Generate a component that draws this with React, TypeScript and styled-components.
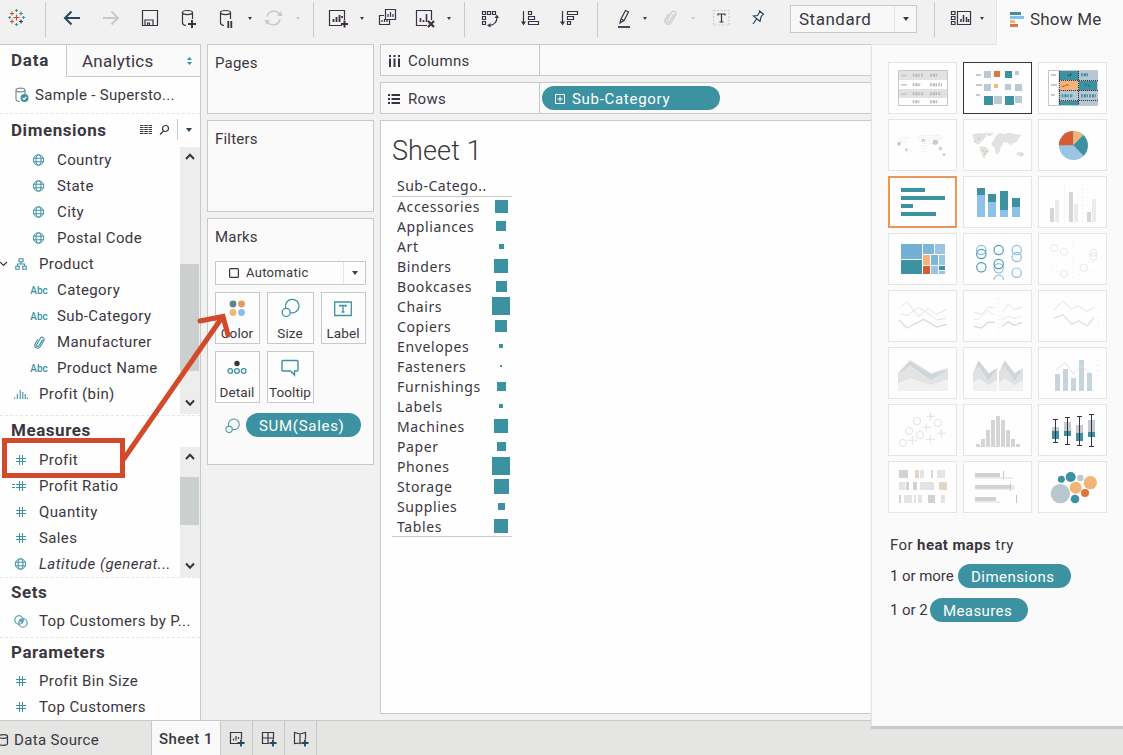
import React from "react";
import styled, { createGlobalStyle, css } from "styled-components";

const c = {
  teal: "#3d92a2", ink: "#3c3142", text: "#3b3741", line: "#c6cbc9", soft: "#e5e5e3",
  chrome: "#f1f1f1", card: "#fafafa", blue: "#85c0ea", lblue: "#9ac4e2", orange: "#f0b577", red: "#d24a2b",
  grey: "#c6cbc9",
};

const Global = createGlobalStyle`
  * { box-sizing: border-box; }
  body { margin: 0; background: ${c.chrome}; overflow: hidden; }
  body, button { font-family: Roboto, "Liberation Sans", sans-serif; font-size: 15px; color: ${c.text}; }
  svg { display: block; flex: none; overflow: visible; }
`;

const Window = styled.div`
  position: relative; width: 1123px; height: 755px; display: flex; flex-direction: column; overflow: hidden; background: ${c.chrome};
`;

/* ---------- toolbar ---------- */
const Toolbar = styled.header`display: flex; height: 44px; flex: none;`;
const Tools = styled.div`display: flex; width: 996px; height: 44px; align-items: flex-start;`;
const ToolSvg = styled.svg<{ $gap: number }>`margin-left: ${(p) => p.$gap}px;`;
const Sep = styled.i<{ $gap: number }>`width: 1px; height: 35px; margin: 2px 0 0 ${(p) => p.$gap}px; background: ${c.line}; flex: none;`;
const Fit = styled.div`
  display: flex; align-items: center; margin: 5px 0 0 25px; width: 127px; height: 28px; border: 1px solid ${c.line}; background: #f8f8f8;
  font-size: 17px; letter-spacing: 0.5px; padding-left: 8px;
`;
const FitArrow = styled.span`margin-left: auto; width: 22px; height: 26px; border-left: 1px solid ${c.soft}; display: flex; align-items: center; justify-content: center;`;
const ShowMeTab = styled.div`
  flex: 1; display: flex; align-items: center; gap: 6px; padding: 0 0 7px 13px; height: 45px; background: ${c.card}; border-left: 1px solid ${c.soft};
  font-size: 17px; letter-spacing: 0.2px; position: relative; z-index: 3;
`;
const Caret = styled.i<{ $gap?: number; $off?: boolean; $size?: number }>`
  width: 0; height: 0; flex: none; margin: ${(p) => (p.$gap !== undefined ? `17px 1px 0 ${p.$gap}px` : "0")};
  border: ${(p) => p.$size ?? 2}px solid transparent; border-top: ${(p) => (p.$size ?? 2) + 1}px solid ${(p) => (p.$off ? c.grey : "#2b4456")}; border-bottom: 0;
`;

const Tool = ({ x, w, gap, off, children }: { x: number; w: number; gap: number; off?: boolean; children: React.ReactNode }) => (
  <ToolSvg $gap={gap} width={w} height={36} viewBox={`${x} 0 ${w} 36`} fill="none" stroke={off ? c.grey : c.ink} strokeWidth={1.2}>
    {children}
  </ToolSvg>
);

const plus = (x: number, y: number, s: number, col: string) => (
  <path key={`${x}-${y}`} d={`M${x - s} ${y}h${2 * s}M${x} ${y - s}v${2 * s}`} stroke={col} strokeWidth={1.1} />
);

/* ---------- body ---------- */
const Body = styled.div`display: flex; height: 676px; flex: none; position: relative; z-index: 2;`;
const Side = styled.aside`width: 201px; border-top: 1px solid ${c.line}; border-right: 1px solid ${c.line}; background: #fefefe; display: flex; flex-direction: column; overflow: hidden;`;
const Tabs = styled.div`display: flex; height: 32px; flex: none; font-size: 17px;`;
const ActiveTab = styled.div`width: 66px; padding-left: 11px; line-height: 31px; font-weight: 700; letter-spacing: 0.8px;`;
const Tab = styled.div`
  flex: 1; display: flex; align-items: center; justify-content: space-between; padding: 1px 8px 0 15px; background: ${c.card};
  border-left: 1px solid ${c.line}; border-bottom: 1px solid ${c.line}; letter-spacing: 0.25px;
`;
const Source = styled.div`
  display: flex; align-items: center; height: 37px; padding: 0 0 1px 15px; gap: 6px; border-bottom: 1px dashed ${c.soft}; letter-spacing: 0.32px; white-space: nowrap;
`;
const Section = styled.section<{ $h: number }>`height: ${(p) => p.$h}px; flex: none; border-bottom: 1px dashed ${c.soft};`;
const Heading = styled.h2<{ $h: number; $drop?: number }>`
  margin: 0; padding: 0 0 ${(p) => p.$drop ?? 2}px 11px; height: ${(p) => p.$h}px; display: flex; align-items: center; font-size: 17px; font-weight: 700; letter-spacing: 0.55px;
`;
const HeadTools = styled.span`margin-left: auto; display: flex; align-items: center; height: 22px; gap: 8px;`;
const HeadCaret = styled.span`width: 23px; height: 21px; border-left: 1px solid ${c.line}; display: flex; align-items: center; justify-content: center;`;
const Scroll = styled.div`display: flex; justify-content: space-between;`;
const List = styled.div`flex: 1; min-width: 0;`;
const Row = styled.div<{ $indent?: boolean; $italic?: boolean }>`
  display: grid; grid-template-columns: ${(p) => (p.$indent ? "57px" : "39px")} auto; justify-content: start; align-items: center; height: 26px; white-space: nowrap; letter-spacing: 0.38px;
  ${(p) => p.$italic && css`font-style: italic; letter-spacing: 0.5px;`}
`;
const Slot = styled.span<{ $indent?: boolean }>`
  display: flex; align-items: center; justify-content: center; width: 20px; margin-left: ${(p) => (p.$indent ? 29 : 11)}px;
`;
const ParentSlot = styled.span`display: flex; align-items: center; gap: 7px; margin-left: -1px;`;
const Abc = styled.b`font-size: 10px; letter-spacing: 0; color: ${c.teal}; font-weight: 500;`;
const Bar = styled.div<{ $h: number }>`width: 20px; height: ${(p) => p.$h}px; background: #ededec; display: flex; flex-direction: column; align-items: center; justify-content: space-between; padding: 6px 0 7px;`;
const Track = styled.div<{ $top: number }>`flex: 1; width: 20px; padding-top: ${(p) => p.$top}px;`;
const Grip = styled.div<{ $h: number }>`height: ${(p) => p.$h}px; background: #cbd0ce; width: 19px;`;

const Cards = styled.div`width: 167px; margin-left: 6px; display: flex; flex-direction: column; gap: 6px;`;
const Card = styled.div<{ $h: number }>`
  height: ${(p) => p.$h}px; border: 1px solid ${c.line}; background: ${c.card}; padding: 9px 7px; line-height: 18px; letter-spacing: 0.2px;
`;
const MarkType = styled.div`display: flex; align-items: center; margin-top: 15px; height: 24px; border: 1px solid ${c.line}; background: #fdfdfd; padding-left: 13px; gap: 7px; font-size: 13px; letter-spacing: 0.3px;`;
const MarkArrow = styled.span`margin-left: auto; width: 22px; height: 22px; border-left: 1px solid ${c.soft}; display: flex; align-items: center; justify-content: center;`;
const MarkGrid = styled.div`display: grid; grid-template-columns: 45px 47px 45px; gap: 7px; margin-top: 7px;`;
const MarkButton = styled.div`
  height: 52px; border: 1px solid ${c.line}; background: #fdfdfd; display: flex; flex-direction: column; align-items: center; justify-content: space-between; padding: 5px 1px 1px 0;
  font-size: 13.5px; letter-spacing: 0.1px; white-space: nowrap;
`;
const Encoding = styled.div`display: flex; align-items: center; margin: 10px 0 0 10px; gap: 6px;`;
const Pill = styled.span<{ $w: number; $ls?: number }>`
  display: inline-flex; align-items: center; gap: 7px; width: ${(p) => p.$w}px; height: 24px; border-radius: 12px; padding: 1px 0 0 13px; background: ${c.teal}; color: #fff; letter-spacing: ${(p) => p.$ls ?? 0.45}px; white-space: nowrap;
`;

const Main = styled.main`width: 491px; margin-left: 6px; display: flex; flex-direction: column;`;
const Shelf = styled.div`display: flex; height: 32px; margin-bottom: 6px; border: 1px solid ${c.line}; border-right: 0; background: ${c.card};`;
const ShelfName = styled.div`width: 159px; border-right: 1px solid ${c.line}; display: flex; align-items: center; gap: 8px; padding: 1px 0 0 7px; letter-spacing: 0.3px;`;
const ShelfDrop = styled.div`flex: 1; display: flex; align-items: center; padding-left: 2px;`;
const Sheet = styled.div`height: 594px; border: 1px solid ${c.line}; border-right: 0; background: #fefefe; padding: 13px 0 0 11px;`;
const Title = styled.h1`margin: 0; font: 300 27px/34px Roboto, sans-serif; letter-spacing: 0.1px;`;
const Table = styled.div`width: 120px; height: 361px; margin-top: 8px; border-bottom: 1px solid ${c.line}; font-family: "Noto Sans", sans-serif; font-size: 14px; letter-spacing: 0.62px;`;
const TableHead = styled.div`height: 21px; line-height: 20px; border-bottom: 1px solid ${c.line}; padding-left: 5px; letter-spacing: 0.5px;`;
const Line = styled.div`display: grid; grid-template-columns: 98px 22px; align-items: center; height: 20px; padding-left: 5px; line-height: 20px; width: 125px;`;
const MarkCell = styled.span`display: flex; justify-content: center; width: 22px;`;
const Mark = styled.i<{ $s: number }>`
  width: ${(p) => p.$s}px; height: ${(p) => p.$s}px; background: ${c.teal}; margin: ${(p) => (p.$s % 2 ? "-1px 0 0 -9px" : "-2px 0 0 -10px")};
`;

const ShowMe = styled.aside`
  flex: 1; height: 682px; border-left: 1px solid ${c.soft}; background: ${c.card}; padding: 18px 16px 0; box-shadow: 0 2px 0 ${c.grey}, 0 3px 1px ${c.grey}, inset 0 1px 0 ${c.soft};
`;
const Thumbs = styled.div`display: grid; grid-template-columns: repeat(3, 69px); gap: 5px 6px;`;
const Thumb = styled.div<{ $kind?: string }>`
  width: 69px; height: 52px; background: #fefefe;
  box-shadow: inset 0 0 0 ${(p) => (p.$kind === "best" ? `2px #e8965a` : p.$kind === "on" ? `1px ${c.ink}` : `1px ${c.soft}`)};
`;
const Hint = styled.p<{ $top: number }>`margin: ${(p) => p.$top}px 0 0 2px; height: 24px; display: flex; align-items: center; gap: 3px; white-space: pre; letter-spacing: 0.4px;`;
const Count = styled.span<{ $w: number }>`width: ${(p) => p.$w}px; letter-spacing: -0.05px;`;

/* ---------- bottom tabs ---------- */
const Bottom = styled.footer`display: flex; height: 35px; border-top: 1px solid ${c.line}; background: ${c.soft}; align-items: stretch;`;
const DataTab = styled.div`width: 152px; display: flex; align-items: center; gap: 5px; padding-top: 3px; border-right: 1px solid ${c.line}; letter-spacing: 0.35px;`;
const SheetTab = styled.div`width: 69px; padding-left: 7px; padding-top: 2px; display: flex; align-items: center; background: #f9f9f9; border-right: 1px solid ${c.line}; font-weight: 500; letter-spacing: 0.45px; white-space: nowrap;`;
const NewTab = styled.div`width: 32px; display: flex; align-items: center; justify-content: center; padding-top: 1px; border-right: 1px solid ${c.line};`;

const Annotation = styled.svg`position: absolute; left: 0; top: 0; z-index: 5; pointer-events: none;`;

/* ---------- small icons ---------- */
const Globe = () => (
  <svg width="12" height="12" viewBox="0 0 12 12" fill="none" stroke={c.teal} strokeWidth="1">
    <circle cx="5.500" cy="6" r="5.200" /><ellipse cx="5.500" cy="6" rx="2.500" ry="5.200" /><path d="M.7 4.200h9.600M.7 7.800h9.600" />
  </svg>
);
const Hash = () => (
  <svg width="12" height="12" viewBox="0 0 12 12" fill="none" stroke={c.teal} strokeWidth="1"><path d="M4.500 1v10M7.500 1v10M1 4.500h10M1 7.500h10" /></svg>
);
const CalcHash = () => (
  <svg width="20" height="12" viewBox="-4 0 20 12" fill="none" stroke={c.teal} strokeWidth="1"><path d="M4.500 1v10M7.500 1v10M1 4.500h10M1 7.500h10M-3 4.500h3M-3 7.500h3" /></svg>
);
const Clip = ({ col = c.teal }: { col?: string }) => (
  <svg width="11" height="13" viewBox="0 0 11 13" fill="none" stroke={col} strokeWidth="1.1"><path d="M8.6 3.6 5 9.8a1.3 1.3 0 0 1-2.3-1.3L6.2 2.4a2.1 2.1 0 0 1 3.7 2L6 11a2.9 2.9 0 0 1-5-2.8l2.8-4.9" /></svg>
);
const Tree = () => (
  <svg width="12" height="12" viewBox="0 0 12 12" fill="none" stroke={c.teal} strokeWidth="1.1"><path d="M4 .8h4v3H4zM.8 8.2h3.4v3H.8zM7.8 8.2h3.4v3H7.8zM6 3.8V6M2.5 8V6h7v2" /></svg>
);
const Bins = () => (
  <svg width="14" height="10" viewBox="0 0 14 10" stroke={c.teal} strokeWidth="1.1"><path d="M.7 8.500V10M3.300 5v5M6.200 1v9M8.800 3v7M11.200 5v5M13.400 8.500V10" /></svg>
);
const Rings = () => (
  <svg width="14" height="13" viewBox="0 0 14 13" fill="none" stroke={c.teal} strokeWidth="1.1"><circle cx="5" cy="5" r="4.200" /><circle cx="9" cy="8" r="4.200" /><path d="m5 5 4 3M6.5 4.2 9.3 6.4" /></svg>
);
const Chevron = ({ up }: { up?: boolean }) => (
  <svg width="10" height="8" viewBox="0 0 10 8" fill="none" stroke={c.ink} strokeWidth="2"><path d={up ? "M1 6 5 1.700 9 6" : "M1 1.5 5 5.8 9 1.5"} /></svg>
);
const SizeIcon = ({ s = 19 }: { s?: number }) => (
  <svg width={s} height={s} viewBox="0 0 19 19" fill="none" stroke={c.teal} strokeWidth="1.3"><path d="M4.800 10.300a6.800 6.800 0 1 1 4.800 4.400" /><circle cx="5.2" cy="14.400" r="4" /></svg>
);

const Field = ({ icon, name, indent, italic }: { icon: React.ReactNode; name: string; indent?: boolean; italic?: boolean }) => (
  <Row $indent={indent} $italic={italic}><Slot $indent={indent}>{icon}</Slot>{name}</Row>
);

/* ---------- Show Me drawings ---------- */
const R = ({ x, y, w, h, f }: { x: number; y: number; w: number; h: number; f: string }) => <rect x={x} y={y} width={w} height={h} fill={f} />;
const rects = (f: string, list: number[][]) => list.map(([x, y, w, h], i) => <R key={f + i} x={x} y={y} w={w} h={h} f={f} />);
const Trace = ({ d, f = "#e2e3e2", w = 3 }: { d: string; f?: string; w?: number }) => <path d={d} fill="none" stroke={f} strokeWidth={w} />;
const rings = (f: string, list: number[][], r = 14, w = 3.5) => list.map(([x, y], i) => <circle key={f + i} cx={x} cy={y} r={r} fill="none" stroke={f} strokeWidth={w} />);
const Scribble = ({ pts, f = "#b4bcba" }: { pts: number[][]; f?: string }) => (
  <>{pts.map(([x, y, w], i) => <path key={i} d={`M${x} ${y}h${w}`} stroke={f} strokeWidth="9" strokeDasharray="5 3 7 2 4 4" />)}</>
);

const drawings: React.ReactNode[] = [
  <>
    <rect x="85.500" y="61.500" width="147" height="105" fill="#fff" stroke={c.grey} strokeWidth="3" />
    {rects("#e2e3e1", [[87, 63, 144, 27], [87, 117, 144, 27]])}
    {rects(c.grey, [[93, 74, 18, 5], [93, 102, 18, 5], [93, 130, 18, 5]])}
    <Scribble pts={[[128, 76, 31], [180, 76, 26], [180, 104, 36], [128, 104, 26], [128, 131, 34], [180, 131, 34], [128, 155, 20], [180, 155, 26]]} />
  </>,
  <>
    {rects(c.grey, [[318, 72, 15, 6], [318, 102, 18, 6], [318, 132, 12, 6]])}
    {rects("#b8cad5", [[342, 63, 21, 21], [435, 63, 12, 12], [342, 102, 21, 21], [405, 102, 18, 18], [435, 102, 21, 21], [372, 138, 24, 24], [435, 138, 21, 21]])}
    {rects("#de7440", [[372, 63, 18, 18]])}{rects(c.orange, [[372, 102, 12, 12]])}
    {rects(c.teal, [[405, 63, 21, 21], [342, 138, 27, 27], [405, 138, 27, 27]])}
  </>,
  <>
    <rect x="535.500" y="61.500" width="147" height="105" fill="#fff" stroke={c.grey} strokeWidth="3" />
    {rects(c.grey, [[543, 72, 15, 6], [543, 102, 18, 6], [543, 132, 12, 6]])}
    {rects(c.teal, [[567, 63, 59, 27], [627, 93, 54, 28], [567, 153, 59, 12]])}
    {rects("#b4c7d2", [[627, 63, 57, 27], [567, 122, 59, 28], [627, 122, 57, 28], [627, 153, 57, 12]])}
    {rects(c.orange, [[569, 93, 55, 27]])}
    <path d="M567 91.500h117M567 121.500h117M567 151.500h117M625.500 63v102M568 63v102" stroke={c.ink} strokeWidth="3" strokeDasharray="4 2" />
    <Scribble f={c.teal} pts={[[575, 137, 34], [633, 137, 44], [633, 74, 24]]} /><path d="M593 76h5M602 70v8M646 104h3M655 107h3" stroke={c.ink} fill="none" strokeWidth="3" /><path d="M575 109h8l4-4h9" stroke={c.red} fill="none" strokeWidth="3" />
  </>,
  <>
    <g fill="none" stroke="#e2e3e2" strokeWidth="2.500" strokeDasharray="3 3">
      <path d="M84 270h20M87 264h32M90 276h24M104 258h12M106 296h18M110 304h16M113 312h8M144 256h12M142 262h76M146 268h70M150 274h62M156 280h40M152 288h20M154 296h18M160 304h10M164 312h5M150 256h60M206 290h12M208 298h8M218 314h12" />
    </g>
    <g fill="#c9cdcb"><circle cx="87" cy="281" r="6" /><circle cx="160" cy="271" r="5" /><circle cx="196" cy="277" r="8" /><circle cx="109" cy="299" r="4" /><circle cx="211" cy="296" r="5" /><circle cx="222" cy="314" r="4" /></g>
    <R x={197} y={274} w={4} h={4} f="#e3c095" />
  </>,
  <>
    <path fill="#e1e2e1" d="M306 253l18-3 10-1 14 4 2 7-7 4-3 6-7 5-4 6-7 3-6-7-5-10zM340 249l30-1-4 8-10 3-6-4zM330 290l12-1 13 8 2 7-9 10-4 11-5 0-4-16-6-9zM371 272l4-10 8-9 8-4 12 3 14-4 20 5 16 1-1 5-6 4-3 9-8 6-7 1-3 7-7-3-5-7-8 3-5-4-2 8 0 3-5 3-3 14-8 12-6-7-1-15-10-7 0-9 7-6zM437 313l8-7 14 0 3 9-8 5-8-3z" />
    {rects(c.orange, [[324, 264, 4, 4], [312, 273, 4, 4], [336, 300, 4, 4], [348, 303, 4, 4], [342, 309, 4, 4], [453, 312, 4, 4]])}
  </>,
  <>
    <circle cx="610.500" cy="286.500" r="43.500" fill={c.lblue} />
    <path d="M610 286V243a43.500 43.500 0 0 0-43.500 43z" fill="#d65a35" /><path d="M610 286V243a43 43 0 0 1 30 12z" fill={c.orange} /><path d="M610 286l30-31a43.500 43.500 0 0 1 1 62z" fill={c.teal} />
  </>,
  <>{rects(c.teal, [[93, 414, 72, 12], [93, 438, 132, 12], [93, 462, 36, 12], [93, 486, 105, 12]])}</>,
  <>
    {rects(c.teal, [[321, 414, 24, 21], [354, 432, 24, 24], [390, 423, 24, 57], [426, 444, 24, 27]])}
    {rects("#8cc2e7", [[321, 435, 24, 66], [354, 456, 24, 45], [390, 480, 24, 21], [426, 471, 24, 30]])}
  </>,
  <>
    {rects("#d3d6d4", [[540, 474, 12, 42], [597, 426, 12, 90], [651, 486, 12, 30]])}{rects("#ebecea", [[555, 450, 12, 66], [612, 462, 12, 54], [666, 447, 12, 69]])}
    <path d="M583.500 405v112M637.500 402v115" stroke="#e2e3e2" strokeWidth="2.500" strokeDasharray="3 9" />
  </>,
  <>
    {rects("#72afd2", [[93, 582, 63, 45]])}{rects("#7cb6da", [[159, 582, 33, 30], [183, 615, 21, 30]])}{rects(c.lblue, [[195, 582, 30, 30], [207, 615, 18, 30], [183, 648, 21, 24], [207, 663, 18, 9]])}
    {rects(c.teal, [[93, 630, 63, 42], [207, 648, 18, 12]])}{rects(c.orange, [[159, 615, 21, 30]])}{rects("#d65a35", [[159, 648, 21, 24]])}
  </>,
  <>
    {rings("#8abfe0", [[334, 600], [386, 655], [440, 600], [440, 621], [440, 668]])}
    {rings("#4c9cad", [[334, 612], [334, 652], [386, 600], [386, 642]])}
    <path d="M372 690a14 14 0 0 1 29 0" fill="none" stroke={c.lblue} strokeWidth="3.500" />
  </>,
  <>
    {rings("#e2e3e2", [[553, 594], [582, 605], [670, 608], [670, 620], [582, 671], [641, 653]], 11, 2.5)}
    <path d="M543 648h18M544 664h20M594 590h12M632 585v12M654 636h28M610 575v120M660 664h16M548 678h14M628 672h20" stroke="#e4e5e4" strokeWidth="2.500" strokeDasharray="3 12" />
  </>,
  <><Trace d="M93 66 111 50 146 94 176 70 197 89 231 73" /><Trace d="M93 86 111 92 146 67 167 80 200 105 228 100" /><Trace d="M87 105 111 129 161 103 200 126 231 118" w={4} f="#dadcdb" /></>,
  <><Trace d="M312 82 336 88 354 67 375 67M396 82 415 58 432 73 456 67" /><Trace d="M312 104 330 101 354 77 372 89M394 104 415 94 432 101 447 96 456 88" w={2.5} /><Trace d="M312 124 335 129 353 112 375 112M396 124 415 110 432 121 456 112" f="#d6d9d7" w={3.5} /><path d="M385 42v110" stroke="#e2e3e2" strokeWidth="2.500" strokeDasharray="3 9" /></>,
  <><Trace d="M552 74 579 49 605 72 623 62 652 80 671 67" /><Trace d="M552 100 579 89 605 118 626 108 652 122 671 98" f="#dadcdb" w={3.5} /><path d="M685 66v82" stroke="#e2e3e2" strokeWidth="2.500" strokeDasharray="3 11" /></>,
  <>
    <path d="M84 264 120 225 183 264 234 249V318H84z" fill="#f1f1f0" /><path d="M84 264 120 225 183 264 234 249V282L183 300 120 280 84 295z" fill="#e2e3e2" />
    <path d="M92 258 120 229 183 268 226 254V260L183 285 120 240 92 262z" fill="#cdd6db" />
  </>,
  <>
    <path d="M309 264 326 226 356 265 381 249V318H309zM387 264 404 226 434 265 459 249V318H387z" fill="#f1f1f0" />
    <path d="M309 264 326 226 356 265 381 249V285L356 300 326 281 309 294zM387 264 404 226 434 265 459 249V285L434 300 404 281 387 294z" fill="#e0e1e0" />
    <path d="M313 258 326 228 356 266 376 253V258L356 288 326 244zM391 258 404 228 434 266 454 253V258L434 288 404 244z" fill="#cdd6db" />
  </>,
  <>{rects("#c6d4dc", [[555, 267, 15, 51], [579, 252, 15, 66], [603, 279, 15, 39], [627, 225, 15, 93], [651, 264, 15, 54]])}<Trace d="M558 255 585 233 611 267 634 243 660 264" /><path d="M684 225v84" stroke="#e2e3e2" strokeWidth="2.500" strokeDasharray="3 12" /></>,
  <>{rings("#e2e3e2", [[141, 408], [117, 438], [150, 450], [99, 474], [204, 414]], 11, 3)}<path d="M168 394h27M181 381v27M156 427h27M169 414v27M114 466h27M127 453v27M201 445h27M214 432v27M168 463h27M181 450v27" stroke="#dcdedd" strokeWidth="2.500" /></>,
  <>{rects("#d3d6d5", [[318, 477, 12, 9], [333, 462, 12, 24], [348, 435, 12, 51], [363, 405, 12, 81], [378, 393, 12, 93], [393, 405, 12, 81], [408, 435, 12, 51], [423, 462, 12, 24], [438, 477, 12, 9]])}</>,
  <>
    {rects("#c5cccd", [[546, 426, 21, 12], [582, 411, 21, 27], [618, 420, 21, 24], [654, 405, 21, 36]])}{rects(c.teal, [[546, 438, 21, 24], [582, 438, 21, 15], [618, 444, 21, 24], [654, 441, 21, 15]])}
    <path d="M549 403.500h15M549 472.500h15M556.500 403v70M585 397.500h15M585 478.500h15M592.500 397v82M621 394.500h15M621 481.500h15M628.500 394v88M657 388.500h15M657 484.500h15M664.500 388v97" stroke={c.ink} strokeWidth="3" />
  </>,
  <>
    {rects("#d0d3d2", [[87, 555, 27, 24], [108, 591, 9, 24], [129, 591, 12, 24], [87, 630, 6, 24], [174, 630, 21, 24]])}
    {rects("#e3e4e3", [[150, 555, 12, 24], [201, 555, 24, 24], [87, 591, 18, 24], [150, 591, 42, 24], [102, 630, 24, 24], [132, 630, 6, 24], [144, 630, 12, 24], [213, 630, 12, 24]])}
    {rects("#e5d5c4", [[135, 555, 12, 24], [183, 555, 6, 24], [207, 591, 24, 24]])}
  </>,
  <>{rects("#ececeb", [[315, 576, 114, 6], [315, 600, 120, 15], [315, 648, 75, 6]])}{rects("#d0d3d2", [[315, 564, 75, 12], [315, 600, 108, 11], [315, 636, 63, 12]])}{rects("#c2c8c5", [[399, 558, 3, 24], [420, 594, 3, 24], [438, 630, 3, 24]])}</>,
  <>
    <g fill={c.teal}><circle cx="574" cy="583" r="10.500" /><circle cx="602" cy="576" r="15" /><circle cx="615" cy="642" r="13" /></g>
    <circle cx="631" cy="579" r="10" fill="#bccbd4" /><circle cx="571" cy="626" r="29" fill="#b9c7ce" />
    <g fill={c.orange}><circle cx="617" cy="608" r="18" /><circle cx="661" cy="593" r="20" /></g><circle cx="645" cy="624" r="12" fill="#de7440" />
  </>,
];
const thumbY = [36, 207, 378, 549, 15, 186, 357, 528];

const table: [string, number][] = [
  ["Accessories", 13], ["Appliances", 10], ["Art", 5], ["Binders", 14], ["Bookcases", 11], ["Chairs", 18], ["Copiers", 12], ["Envelopes", 4], ["Fasteners", 2],
  ["Furnishings", 9], ["Labels", 4], ["Machines", 14], ["Paper", 9], ["Phones", 18], ["Storage", 15], ["Supplies", 7], ["Tables", 14],
];

const Cylinder = ({ x }: { x: number }) => (
  <path d={`M${x + 4} 25.500q-3.500-.5-3.500-2.500V12.500c0-2.700 10-2.700 10 0V19M${x + 0.5} 12.500c0 2.700 10 2.700 10 0`} />
);

const MainToolbar = () => (
  <Tools>
    <Tool x={8} w={17} gap={8}>
      {plus(16.5, 17.5, 3, c.red)}{plus(12, 13.5, 2, c.red)}{plus(21, 13.5, 2, c.teal)}{plus(12, 21.5, 2, c.red)}{plus(21, 21.5, 2, c.ink)}
      {plus(16.5, 10.5, 1.6, c.teal)}{plus(16.5, 24.5, 1.6, c.teal)}{plus(9.7, 17.5, 1.6, c.teal)}{plus(23.5, 17.5, 1.6, c.teal)}
    </Tool>
    <Sep $gap={20} />
    <Tool x={63} w={17} gap={17}><path d="M80 18H65M71.500 11.500 65 18l6.500 6.500" stroke="#24475a" strokeWidth="2" /></Tool>
    <Tool x={103} w={16} gap={23} off><path d="M103 18h15M111.500 11.500 118 18l-6.500 6.500" strokeWidth="2" /></Tool>
    <Tool x={142} w={16} gap={23}><path d="M142.500 10.500h15v15h-15zM145 25v-5h8v5M147.500 25v-2h2v2" /></Tool>
    <Tool x={182} w={14} gap={24}><Cylinder x={182} /><path d="M188 24h8M192 20v8" strokeWidth="2" /></Tool>
    <Tool x={220} w={12} gap={24}><Cylinder x={220} /><path d="M228.300 21v7M231.300 21v7" strokeWidth="1.8" /></Tool>
    <Caret $gap={16} />
    <Tool x={265} w={17} gap={12} off><path d="M267 16.500a7 7 0 0 1 13-1.500M280 19.500a7 7 0 0 1-13 1.500" strokeWidth="1.600" /><path d="M277 16h5.500l-2-5zM270 20h-5.500l2 5z" fill={c.grey} stroke="none" /></Tool>
    <Caret $gap={14} $off />
    <Sep $gap={12} />
    <Tool x={329} w={19} gap={15}><path d="M342 25.500h-12.500v-15h15V20" /><path d="M333.500 22v-3M336.500 22v-5M339.500 22v-7M342 18v-2" strokeWidth="1.800" /><path d="M341 24h7M344.500 20.500v7" strokeWidth="2" /></Tool>
    <Caret $gap={12} />
    <Tool x={379} w={17} gap={14}><path d="M384 15.500h-4.500v9h10v-5M385.500 9.500h10v10h-10zM382 22v-2M384.500 22v-3M387 22v-2M388 17v-3M390.500 17v-5M393 17v-3" /></Tool>
    <Tool x={416} w={19} gap={20}><path d="M427 25.500h-10.500v-15h15V20" /><path d="M420.500 22v-4M423.500 22v-2M426.500 22v-8" strokeWidth="1.600" /><path d="m428 21 6 6M434 21l-6 6" strokeWidth="2.200" /></Tool>
    <Caret $gap={12} />
    <Sep $gap={12} />
    <Tool x={482} w={16} gap={17}>
      <path d="M482.500 11.500h3v3h-3zM487.500 11.500h3v3h-3zM492.500 11.500h3v3h-3zM482.500 16.500h3v3h-3zM482.500 21.500h3v3h-3zM497 17c0 5-3 8-8 8.500" /><path d="m494.500 18 2.500-3.500 2 3.500zM490.500 23l-3.500 2.500 3.500 2z" fill="#24475a" stroke="none" />
    </Tool>
    <Tool x={521} w={18} gap={23}><path d="M523.500 11v13M528.500 11.500h3v3h-3zM528.500 16.500h6v3h-6zM528.500 21.500h10v3h-10z" /><path d="M521 21.500h5l-2.500 4z" fill={c.ink} stroke="none" /></Tool>
    <Tool x={560} w={18} gap={21}><path d="M562.500 11v13M567.500 11.500h10v3h-10zM567.500 16.500h6v3h-6zM567.500 21.500h3v3h-3z" /><path d="M560 21.500h5l-2.500 4z" fill={c.ink} stroke="none" /></Tool>
    <Sep $gap={19} />
    <Tool x={618} w={12} gap={20}><path d="m620 23 1-4 4.500-8.500 3 1.500-4.500 8.500zM621 19l3 1.500" /><path d="M618 27h12" strokeWidth="1.800" /></Tool>
    <Caret $gap={13} />
    <Tool x={664} w={13} gap={16} off><path d="m674 14-4.200 7.500a1.500 1.500 0 0 1-2.600-1.500l4.300-7.600a2.400 2.400 0 0 1 4.200 2.400l-4.600 8a3.400 3.400 0 0 1-5.900-3.300l3.300-5.900" /></Tool>
    <Caret $gap={14} $off />
    <Tool x={713} w={17} gap={17}><rect x="713.500" y="10.500" width="15.500" height="14.500" stroke={c.grey} strokeDasharray="2 1.500" /><path d="M718 15.500v-1.500h7v1.500M721.500 14v8M719.500 22h4" /></Tool>
    <Tool x={752} w={13} gap={22}><path d="m759 10.500 5 4M760 11.500l-2.500 4-4 .5 6.500 5.500 1-4.500 2.500-3.500M756.500 19l-3.500 5" stroke="#24475a" /></Tool>
    <Fit>Standard<FitArrow><Caret $size={3} /></FitArrow></Fit>
    <Sep $gap={17} />
    <Tool x={951} w={20} gap={16}><path d="M951.500 11.500h3.500v3h-3.500zM951.500 16.500h3.500v3h-3.500zM951.500 21.500h3.500v3h-3.500zM957.500 11.500h13v13h-13z" /><path d="M961 22v-3M963.500 22v-7M966.500 22v-5M968.500 22v-3" strokeWidth="1.500" /></Tool>
    <Caret $gap={9} />
  </Tools>
);

export default function App() {
  return (
    <Window>
      <Global />
      <Toolbar>
        <MainToolbar />
        <ShowMeTab>
          <svg width="14" height="15" viewBox="0 0 14 15"><R x={0} y={0} w={11} h={3} f={c.teal} /><R x={0} y={4} w={14} h={3} f={c.blue} /><R x={0} y={8} w={5} h={3} f={c.orange} /><R x={0} y={12} w={8} h={3} f="#de7440" /></svg>
          Show Me
        </ShowMeTab>
      </Toolbar>

      <Body>
        <Side>
          <Tabs>
            <ActiveTab>Data</ActiveTab>
            <Tab>Analytics<svg width="5" height="8" viewBox="0 0 5 8" fill={c.teal}><path d="M0 3 2.500 0 5 3zM0 5l2.500 3L5 5z" /></svg></Tab>
          </Tabs>
          <Source>
            <svg width="14" height="16" viewBox="0 0 14 16" fill="none" stroke="#7f8b93" strokeWidth="1.200"><path d="M5 14.500q-4-.3-4-2.500V3c0-2.600 9-2.600 9 0v4M1 3c0 2.600 9 2.600 9 0" /><circle cx="9.500" cy="11" r="4" fill={c.teal} stroke="none" /><path d="m7.700 11 1.300 1.400 2.300-2.600" stroke="#fff" /></svg>
            Sample - Supersto...
          </Source>

          <Section $h={302}>
            <Heading $h={33}>
              Dimensions
              <HeadTools>
                <svg width="12" height="10" viewBox="0 0 12 10" stroke={c.ink} strokeWidth="1"><path d="M0 .5h12M0 2.500h12M0 4.500h12M0 6.500h12M0 8.500h12" strokeDasharray="3.500 .8" /></svg>
                <svg width="9" height="10" viewBox="0 0 9 10" fill="none" stroke={c.ink} strokeWidth="1.200"><circle cx="5.500" cy="3.500" r="3" /><path d="M3.500 6 0 9.500" /></svg>
                <HeadCaret><Caret $size={3} /></HeadCaret>
              </HeadTools>
            </Heading>
            <Scroll>
              <List>
                {["Country", "State", "City", "Postal Code"].map((n) => <Field key={n} indent icon={<Globe />} name={n} />)}
                <Row>
                  <ParentSlot><svg width="9" height="6" viewBox="0 0 9 6" fill="none" stroke={c.ink} strokeWidth="1.200"><path d="M1 1l3.500 3.500L8 1" /></svg><Tree /></ParentSlot>
                  Product
                </Row>
                <Field indent icon={<Abc>Abc</Abc>} name="Category" />
                <Field indent icon={<Abc>Abc</Abc>} name="Sub-Category" />
                <Field indent icon={<Clip />} name="Manufacturer" />
                <Field indent icon={<Abc>Abc</Abc>} name="Product Name" />
                <Field icon={<Bins />} name="Profit (bin)" />
              </List>
              <Bar $h={267}><Chevron up /><Track $top={103}><Grip $h={107} /></Track><Chevron /></Bar>
            </Scroll>
          </Section>

          <Section $h={162}>
            <Heading $h={31} $drop={3}>Measures</Heading>
            <Scroll>
              <List>
                <Field icon={<Hash />} name="Profit" />
                <Field icon={<CalcHash />} name="Profit Ratio" />
                <Field icon={<Hash />} name="Quantity" />
                <Field icon={<Hash />} name="Sales" />
                <Field icon={<Globe />} name="Latitude (generat..." italic />
              </List>
              <Bar $h={130}><Chevron up /><Track $top={16}><Grip $h={48} /></Track><Chevron /></Bar>
            </Scroll>
          </Section>

          <Section $h={60}>
            <Heading $h={30}>Sets</Heading>
            <Field icon={<Rings />} name="Top Customers by P..." />
          </Section>

          <Heading $h={30}>Parameters</Heading>
          <Field icon={<Hash />} name="Profit Bin Size" />
          <Field icon={<Hash />} name="Top Customers" />
        </Side>

        <Cards>
          <Card $h={70}>Pages</Card>
          <Card $h={92}>Filters</Card>
          <Card $h={247}>
            Marks
            <MarkType>
              <svg width="10" height="10" viewBox="0 0 10 10"><rect x=".6" y=".6" width="8.800" height="8.800" rx="1" fill="none" stroke={c.ink} strokeWidth="1.200" /></svg>
              Automatic<MarkArrow><Caret $size={3} /></MarkArrow>
            </MarkType>
            <MarkGrid>
              <MarkButton>
                <svg width="18" height="20" viewBox="0 0 18 20"><circle cx="5" cy="6" r="3.400" fill="#5b8490" /><circle cx="13.500" cy="6" r="3.400" fill="#e39a5e" /><circle cx="5" cy="14.500" r="3.400" fill={c.orange} /><circle cx="13.500" cy="14.500" r="3.400" fill={c.blue} /></svg>
                Color
              </MarkButton>
              <MarkButton><SizeIcon />Size</MarkButton>
              <MarkButton><svg width="18" height="20" viewBox="0 0 18 20" fill="none" stroke={c.teal} strokeWidth="1.300"><path d="M.7 4h16.600v13.500H.7zM6 9V7.500h6V9M9 7.500V14M7.500 14h3" /></svg>Label</MarkButton>
              <MarkButton><svg width="20" height="20" viewBox="0 0 20 20" fill="none" stroke={c.teal} strokeWidth="1.300"><circle cx="10" cy="6.500" r="2.700" fill={c.ink} stroke="none" /><circle cx="3.300" cy="14" r="2.300" /><circle cx="10" cy="14" r="2.300" /><circle cx="16.700" cy="14" r="2.300" /></svg>Detail</MarkButton>
              <MarkButton><svg width="18" height="20" viewBox="0 0 18 20" fill="none" stroke={c.teal} strokeWidth="1.400"><path d="M2 3.500h14q1 0 1 1v8.500q0 1-1 1h-2.500V18L9.500 14H2q-1 0-1-1V4.500q0-1 1-1z" /></svg>Tooltip</MarkButton>
            </MarkGrid>
            <Encoding><SizeIcon s={15} /><Pill $w={115} $ls={0.7}>SUM(Sales)</Pill></Encoding>
          </Card>
        </Cards>

        <Main>
          <Shelf>
            <ShelfName><svg width="12" height="12" viewBox="0 0 12 12" stroke={c.ink} strokeWidth="2"><path d="M2 0v2M2 3.500V12M6.500 0v2M6.500 3.500V12M11 0v2M11 3.500V12" /></svg>Columns</ShelfName>
            <ShelfDrop />
          </Shelf>
          <Shelf>
            <ShelfName><svg width="12" height="10" viewBox="0 0 12 10" stroke={c.ink} strokeWidth="2"><path d="M0 1h2M3.500 1H12M0 5h2M3.500 5H12M0 9h2M3.500 9H12" /></svg>Rows</ShelfName>
            <ShelfDrop><Pill $w={178} $ls={0.7}><svg width="10" height="10" viewBox="0 0 10 10" fill="none" stroke="#fff"><path d="M.5.5h9v9h-9zM2.500 5h5M5 2.500v5" /></svg>Sub-Category</Pill></ShelfDrop>
          </Shelf>
          <Sheet>
            <Title>Sheet 1</Title>
            <Table>
              <TableHead>Sub-Catego..</TableHead>
              {table.map(([n, s]) => <Line key={n}>{n}<MarkCell><Mark $s={s} /></MarkCell></Line>)}
            </Table>
          </Sheet>
        </Main>

        <ShowMe>
          <Thumbs>
            {drawings.map((d, i) => (
              <Thumb key={i} $kind={i === 1 ? "on" : i === 6 ? "best" : undefined}>
                <svg width="69" height="52" viewBox={`${54 + (i % 3) * 225} ${thumbY[Math.floor(i / 3)]} 207 156`}>{d}</svg>
              </Thumb>
            ))}
          </Thumbs>
          <Hint $top={20}><span>For <b>heat maps</b> try</span></Hint>
          <Hint $top={7}><Count $w={65}>1 or more</Count><Pill $w={113} $ls={0.45}>Dimensions</Pill></Hint>
          <Hint $top={10}><Count $w={37}>1 or 2</Count><Pill $w={98} $ls={0.4}>Measures</Pill></Hint>
        </ShowMe>
      </Body>

      <Bottom>
        <DataTab><svg width="9" height="12" viewBox="0 0 9 12" fill="none" stroke={c.ink} strokeWidth="1.200"><path d="M-1 2.500c0-2.400 8.500-2.400 8.500 0v7c0 2.400-8.500 2.400-8.500 0M-1 2.500c0 2.400 8.500 2.400 8.500 0" /></svg>Data Source</DataTab>
        <SheetTab>Sheet 1</SheetTab>
        <NewTab><svg width="16" height="16" viewBox="0 0 16 16" fill="none" stroke={c.ink} strokeWidth="1.200"><path d="M9 12.500H1.500v-11h11V8M4.500 9.500v-2M7 9.500V5M9.500 8V6" /><path d="M8.500 12h7M12 8.500v7" stroke="#24475a" strokeWidth="1.800" /></svg></NewTab>
        <NewTab><svg width="16" height="16" viewBox="0 0 16 16" fill="none" stroke={c.ink} strokeWidth="1.200"><path d="M8 12.500H1.500v-11h11V8M1.500 7h11M7 1.500v11" /><path d="M8.500 12h7M12 8.500v7" stroke="#24475a" strokeWidth="1.800" /></svg></NewTab>
        <NewTab><svg width="16" height="16" viewBox="0 0 16 16" fill="none" stroke={c.ink} strokeWidth="1.200"><path d="M8 13 7 12l-5.500.5v-11L7 3l5.500-1.500V8M7 3v9" /><path d="M8.500 12h7M12 8.500v7" stroke="#24475a" strokeWidth="1.800" /></svg></NewTab>
      </Bottom>

      <Annotation width="1123" height="755" viewBox="0 0 1123 755" fill="none" stroke={c.red} strokeWidth="5">
        <rect x="4.500" y="440.500" width="118" height="35" />
        <path d="M123 460 221 319" /><path d="M200 321 223 316.500 228 335" strokeLinecap="round" />
      </Annotation>
    </Window>
  );
}
